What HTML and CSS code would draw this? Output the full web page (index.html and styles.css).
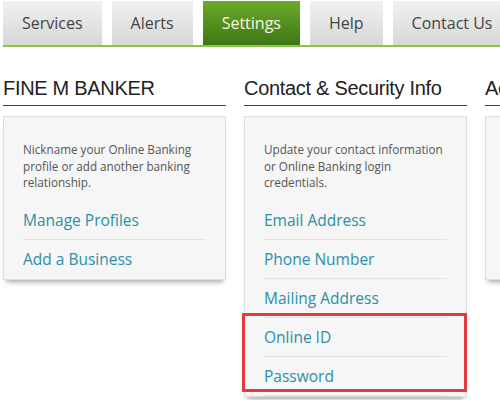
FILE: index.html
```html
<!DOCTYPE html>
<html lang="en">
<head>
    <meta charset="UTF-8">
    <title>Profile &amp; Settings</title>
    <link rel="stylesheet" href="styles.css">
</head>
<body>
<ul class="tabs">
    <li class="tab">Services</li>
    <li class="tab">Alerts</li>
    <li class="tab active">Settings</li>
    <li class="tab">Help</li>
    <li class="tab">Contact Us</li>
</ul>
<div class="columns">
    <div class="col">
        <h2>FINE M BANKER</h2>
        <div class="card">
            <p class="desc">Nickname your Online Banking profile or add another banking relationship.</p>
            <ul class="links">
                <li><a href="#">Manage Profiles</a></li>
                <li><a href="#">Add a Business</a></li>
            </ul>
        </div>
    </div>
    <div class="col">
        <h2>Contact &amp; Security Info</h2>
        <div class="card">
            <p class="desc">Update your contact information or Online Banking login credentials.</p>
            <ul class="links">
                <li><a href="#">Email Address</a></li>
                <li><a href="#">Phone Number</a></li>
                <li><a href="#">Mailing Address</a></li>
            </ul>
            <ul class="links marked">
                <li><a href="#">Online ID</a></li>
                <li><a href="#">Password</a></li>
            </ul>
        </div>
    </div>
    <div class="col">
        <h2>Account Settings</h2>
        <div class="card short"></div>
    </div>
</div>
</body>
</html>
```

FILE: styles.css
```css
* {
    margin: 0;
    padding: 0;
    box-sizing: border-box;
}

html, body {
    width: 100%;
    height: 100%;
    overflow: hidden;
}

body {
    background: #fff;
    font-family: "Open Sans", "Liberation Sans", sans-serif;
}

.tabs {
    display: flex;
    gap: 10px;
    margin-left: 3px;
    padding-top: 1px;
    border-bottom: 2px solid #8cc449;
    list-style: none;
}

.tab {
    flex: none;
    height: 44px;
    line-height: 45px;
    padding: 0 19px;
    font-size: 16px;
    color: #444;
    background: linear-gradient(#f1f1f1, #d7d7d7);
    white-space: nowrap;
}

.tab.active {
    background: linear-gradient(#6aa92b, #3d7815);
    color: #fbf6e2;
}

.columns {
    display: flex;
    gap: 18px;
    margin-left: 3px;
    margin-top: 29px;
}

.col {
    flex: none;
    width: 223px;
}

h2 {
    font-family: "Liberation Sans", Arial, sans-serif;
    font-weight: normal;
    font-size: 20px;
    letter-spacing: -0.3px;
    color: #222;
    height: 30px;
    line-height: 24px;
    border-bottom: 1px solid #444;
    white-space: nowrap;
}

.card {
    margin-top: 10px;
    padding: 24px 19px 0;
    background: #f6f6f6;
    border: 1px solid #dedede;
    box-shadow: 0 5px 5px -3px rgba(0, 0, 0, .35);
}

.card.short {
    height: 164px;
}

.desc {
    font-size: 11.7px;
    line-height: 16.5px;
    color: #555;
    margin-bottom: 10px;
}

.links {
    list-style: none;
}

.links li {
    height: 39px;
    line-height: 39px;
    border-bottom: 1px solid #e3e3e3;
}

.links:not(.marked) li:last-child {
    border-bottom: none;
}

.col:nth-child(2) .links:not(.marked) li:last-child {
    border-bottom: 1px solid #e3e3e3;
}

.links a {
    font-size: 15.5px;
    color: #2a90a8;
    text-decoration: none;
}

.marked {
    position: relative;
}

.marked::after {
    content: "";
    position: absolute;
    top: -5px;
    bottom: 4px;
    left: -22px;
    right: -20px;
    border: 3px solid #e23b3d;
}
```
